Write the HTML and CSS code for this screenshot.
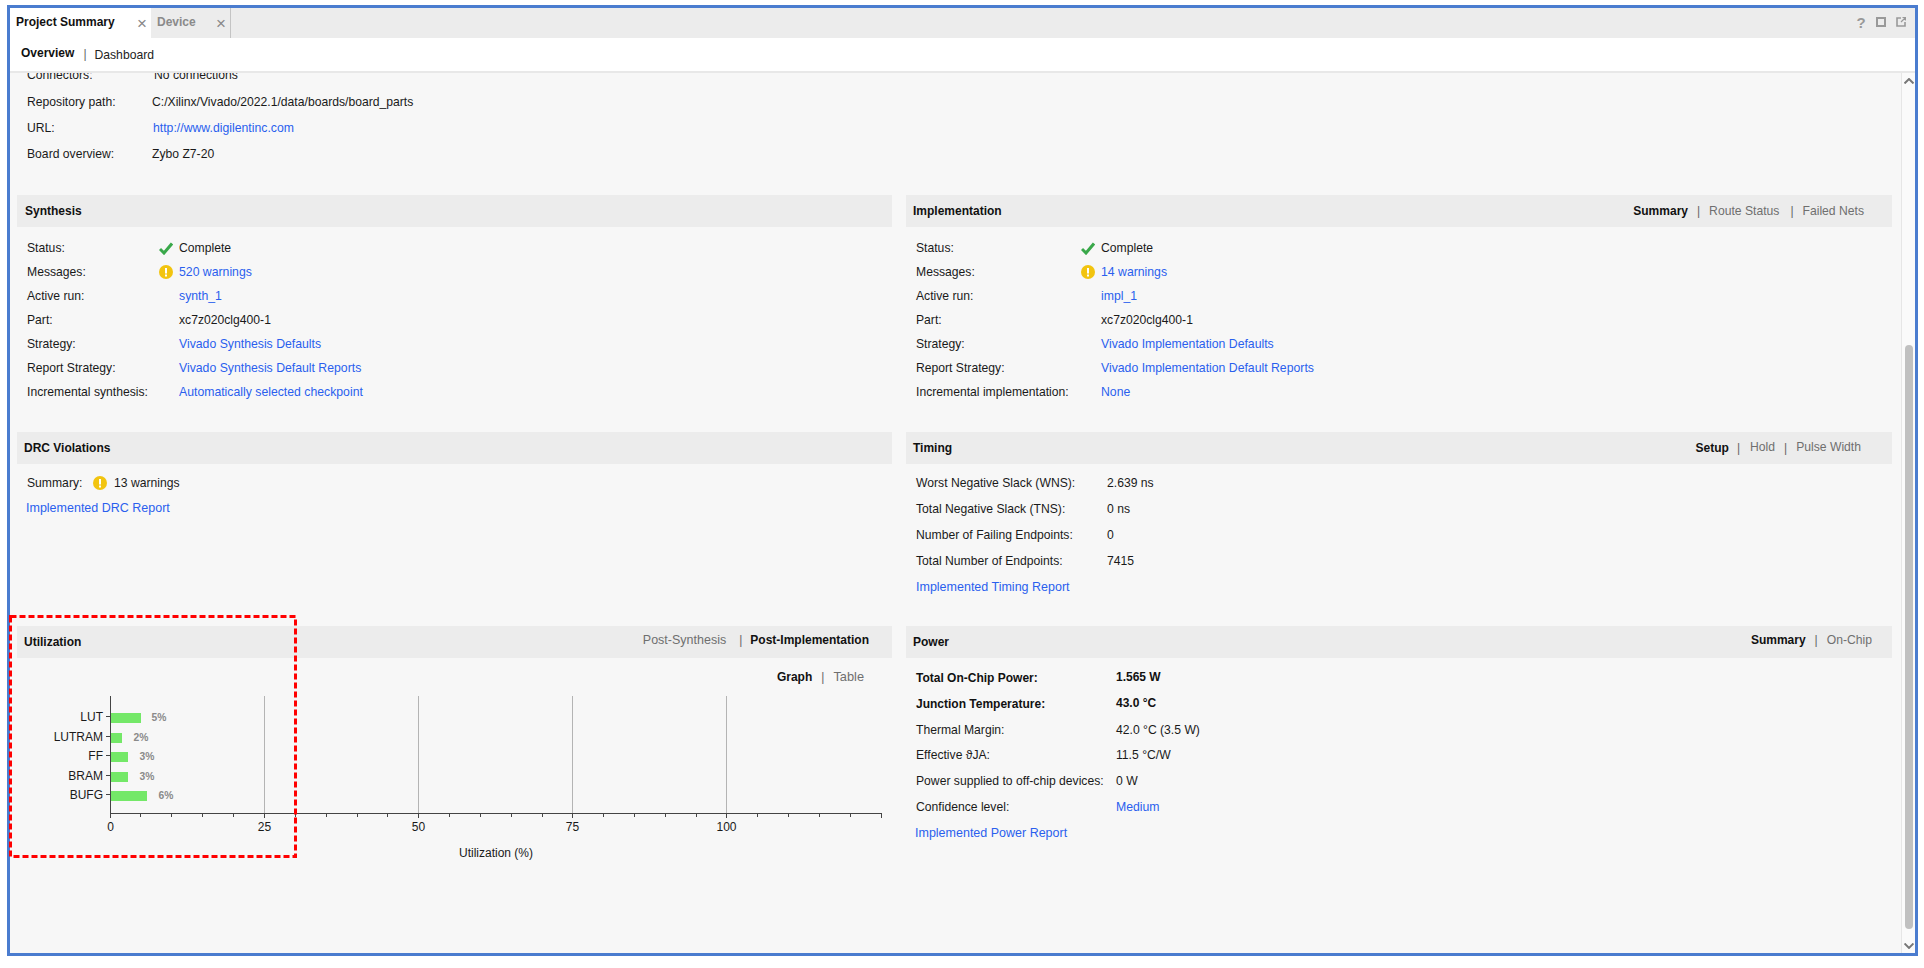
FILE: index.html
```html
<!DOCTYPE html>
<html lang="en">
<head>
<meta charset="utf-8">
<title>Project Summary</title>
<link rel="stylesheet" href="styles.css">
</head>
<body>
<div class="frame">
  <header class="tabbar">
    <div class="tab tab-active"><span class="tab-name">Project Summary</span><span class="tab-close">×</span></div>
    <div class="tab tab-idle"><span class="tab-name">Device</span><span class="tab-close">×</span></div>
    <div class="win-icons">
      <span class="help">?</span>
      <svg class="win-icon" width="10" height="10" viewBox="0 0 10 10"><rect x="1" y="1" width="8" height="8" fill="none" stroke="#999" stroke-width="2"/></svg>
      <svg class="win-icon" width="10" height="10" viewBox="0 0 10 10"><path d="M5 1H1V9H9V5" fill="none" stroke="#999" stroke-width="1.6"/><path d="M5 5L9.5 .5M6.5 .5H9.5V3.5" fill="none" stroke="#999" stroke-width="1.2"/></svg>
    </div>
  </header>
  <nav class="subnav">
    <span class="sub-strong">Overview</span><span class="sub-sep">|</span><span class="sub-item">Dashboard</span>
  </nav>
  <div class="body">
    <main class="content">
      <section class="board">
        <div class="board-row board-clipped"><span class="board-label">Connectors:</span><span class="board-val">No connections</span></div>
        <div class="board-row"><span class="board-label">Repository path:</span><span>C:/Xilinx/Vivado/2022.1/data/boards/board_parts</span></div>
        <div class="board-row"><span class="board-label">URL:</span><a class="link board-link">http://www.digilentinc.com</a></div>
        <div class="board-row"><span class="board-label">Board overview:</span><span>Zybo Z7-20</span></div>
      </section>
      <div class="panels">
        <section class="panel">
          <div class="panel-head"><h2 class="panel-title title-synth">Synthesis</h2></div>
          <div class="run run-synth">
            <div class="run-row"><span class="run-label">Status:</span><span class="run-icon"><svg width="14" height="13" viewBox="0 0 14 13"><path d="M1 7L5 11L13 1.500" fill="none" stroke="#39a84a" stroke-width="3"/></svg></span><span>Complete</span></div>
            <div class="run-row"><span class="run-label">Messages:</span><span class="run-icon"><svg width="14" height="14" viewBox="0 0 14 14"><circle cx="7" cy="7" r="7" fill="#f2c40f"/><rect x="6" y="3" width="2" height="5.5" fill="#fff"/><rect x="6" y="9.5" width="2" height="2" fill="#fff"/></svg></span><a class="link">520 warnings</a></div>
            <div class="run-row"><span class="run-label">Active run:</span><span class="run-icon"></span><a class="link">synth_1</a></div>
            <div class="run-row"><span class="run-label">Part:</span><span class="run-icon"></span><span>xc7z020clg400-1</span></div>
            <div class="run-row"><span class="run-label">Strategy:</span><span class="run-icon"></span><a class="link">Vivado Synthesis Defaults</a></div>
            <div class="run-row"><span class="run-label">Report Strategy:</span><span class="run-icon"></span><a class="link">Vivado Synthesis Default Reports</a></div>
            <div class="run-row"><span class="run-label">Incremental synthesis:</span><span class="run-icon"></span><a class="link">Automatically selected checkpoint</a></div>
          </div>
        </section>
        <section class="panel">
          <div class="panel-head"><h2 class="panel-title">Implementation</h2>
            <div class="views views-impl"><span class="view-on">Summary</span><span class="view-sep">|</span><span class="view">Route Status</span><span class="view-sep view-sep-wide">|</span><span class="view">Failed Nets</span></div></div>
          <div class="run run-impl">
            <div class="run-row"><span class="run-label">Status:</span><span class="run-icon"><svg width="14" height="13" viewBox="0 0 14 13"><path d="M1 7L5 11L13 1.500" fill="none" stroke="#39a84a" stroke-width="3"/></svg></span><span>Complete</span></div>
            <div class="run-row"><span class="run-label">Messages:</span><span class="run-icon"><svg width="14" height="14" viewBox="0 0 14 14"><circle cx="7" cy="7" r="7" fill="#f2c40f"/><rect x="6" y="3" width="2" height="5.5" fill="#fff"/><rect x="6" y="9.5" width="2" height="2" fill="#fff"/></svg></span><a class="link">14 warnings</a></div>
            <div class="run-row"><span class="run-label">Active run:</span><span class="run-icon"></span><a class="link">impl_1</a></div>
            <div class="run-row"><span class="run-label">Part:</span><span class="run-icon"></span><span>xc7z020clg400-1</span></div>
            <div class="run-row"><span class="run-label">Strategy:</span><span class="run-icon"></span><a class="link">Vivado Implementation Defaults</a></div>
            <div class="run-row"><span class="run-label">Report Strategy:</span><span class="run-icon"></span><a class="link">Vivado Implementation Default Reports</a></div>
            <div class="run-row"><span class="run-label">Incremental implementation:</span><span class="run-icon"></span><a class="link">None</a></div>
          </div>
        </section>
        <section class="panel">
          <div class="panel-head"><h2 class="panel-title">DRC Violations</h2></div>
          <div class="drc">
            <div class="drc-row"><span class="drc-label">Summary:</span><svg width="14" height="14" viewBox="0 0 14 14"><circle cx="7" cy="7" r="7" fill="#f2c40f"/><rect x="6" y="3" width="2" height="5.5" fill="#fff"/><rect x="6" y="9.5" width="2" height="2" fill="#fff"/></svg><span>13 warnings</span></div>
            <a class="link report-link drc-link">Implemented DRC Report</a>
          </div>
        </section>
        <section class="panel">
          <div class="panel-head"><h2 class="panel-title">Timing</h2>
            <div class="views views-timing"><span class="view-on">Setup</span><span class="view-sep view-sep-setup">|</span><span class="view">Hold</span><span class="view-sep">|</span><span class="view">Pulse Width</span></div></div>
          <div class="stats stats-timing">
            <div class="stat"><span class="stat-label">Worst Negative Slack (WNS):</span><span>2.639 ns</span></div>
            <div class="stat"><span class="stat-label">Total Negative Slack (TNS):</span><span>0 ns</span></div>
            <div class="stat"><span class="stat-label">Number of Failing Endpoints:</span><span>0</span></div>
            <div class="stat"><span class="stat-label">Total Number of Endpoints:</span><span>7415</span></div>
            <div class="stat"><a class="link report-link">Implemented Timing Report</a></div>
          </div>
        </section>
        <section class="panel">
          <div class="panel-head"><h2 class="panel-title">Utilization</h2>
            <div class="views views-util"><span class="view view-wide">Post-Synthesis</span><span class="view-sep view-sep-util">|</span><span class="view-on">Post-Implementation</span></div></div>
          <div class="chart-tabs"><span class="view-on">Graph</span><span class="view-sep">|</span><span class="view view-table">Table</span></div>
          <svg class="chart" width="875" height="180" viewBox="17 690 875 180">
            <g class="grid">
              <path d="M264.500 696V813M418.500 696V813M572.500 696V813M726.500 696V813"/>
            </g>
            <g class="axis">
              <path d="M110.500 696V813.500H882"/>
              <path d="M106 716.500H110M106 736.500H110M106 755.500H110M106 775.500H110M106 794.500H110"/>
              <path d="M110.500 813V818M140.500 813V817M171.500 813V817M202.500 813V817M233.500 813V817M264.500 813V818M295.500 813V817M326.500 813V817M357.500 813V817M387.500 813V817M418.500 813V818M449.500 813V817M480.500 813V817M511.500 813V817M542.500 813V817M572.500 813V818M603.500 813V817M634.500 813V817M665.500 813V817M696.500 813V817M726.500 813V818M757.500 813V817M788.500 813V817M819.500 813V817M850.500 813V817M881.500 813V818"/>
            </g>
            <g class="bars">
              <rect x="111" y="713" width="30" height="10"/>
              <rect x="111" y="733" width="11" height="10"/>
              <rect x="111" y="752" width="17" height="10"/>
              <rect x="111" y="772" width="17" height="10"/>
              <rect x="111" y="791" width="36" height="10"/>
            </g>
            <g class="cat">
              <text x="103" y="721">LUT</text>
              <text x="103" y="741">LUTRAM</text>
              <text x="103" y="760">FF</text>
              <text x="103" y="780">BRAM</text>
              <text x="103" y="799">BUFG</text>
            </g>
            <g class="pct">
              <text x="151.500" y="721">5%</text>
              <text x="133.500" y="741">2%</text>
              <text x="139.500" y="760">3%</text>
              <text x="139.500" y="780">3%</text>
              <text x="158.500" y="799">6%</text>
            </g>
            <g class="tick">
              <text x="110.500" y="831">0</text>
              <text x="264.500" y="831">25</text>
              <text x="418.500" y="831">50</text>
              <text x="572.500" y="831">75</text>
              <text x="726.500" y="831">100</text>
              <text x="496" y="857">Utilization (%)</text>
            </g>
          </svg>
        </section>
        <section class="panel">
          <div class="panel-head"><h2 class="panel-title">Power</h2>
            <div class="views views-power"><span class="view-on">Summary</span><span class="view-sep">|</span><span class="view">On-Chip</span></div></div>
          <div class="stats stats-power">
            <div class="stat stat-bold"><span class="stat-label">Total On-Chip Power:</span><span class="stat-raised">1.565 W</span></div>
            <div class="stat stat-bold"><span class="stat-label">Junction Temperature:</span><span class="stat-raised">43.0 °C</span></div>
            <div class="stat"><span class="stat-label">Thermal Margin:</span><span>42.0 °C (3.5 W)</span></div>
            <div class="stat"><span class="stat-label">Effective ϑJA:</span><span>11.5 °C/W</span></div>
            <div class="stat"><span class="stat-label">Power supplied to off-chip devices:</span><span>0 W</span></div>
            <div class="stat"><span class="stat-label">Confidence level:</span><a class="link">Medium</a></div>
            <div class="stat"><a class="link report-link stat-link">Implemented Power Report</a></div>
          </div>
        </section>
      </div>
    </main>
    <aside class="scrollbar">
      <svg width="10" height="6" viewBox="0 0 10 6"><path d="M.5 5.500L5 1L9.500 5.500" fill="none" stroke="#777" stroke-width="2"/></svg>
      <div class="thumb"></div>
      <svg width="10" height="6" viewBox="0 0 10 6"><path d="M.5 .5L5 5L9.500 .5" fill="none" stroke="#777" stroke-width="2"/></svg>
    </aside>
  </div>
</div>
<svg class="callout" width="289" height="244" viewBox="0 0 289 244"><rect x="1.500" y="1.500" width="285" height="240" fill="none" stroke="#ff0000" stroke-width="3" stroke-dasharray="6 3"/></svg>
</body>
</html>
```
FILE: styles.css
```css
* { box-sizing: border-box; }
html, body { margin: 0; padding: 0; background: #fff; }
body { width: 1924px; height: 968px; overflow: hidden; font: 12.17px/1 "Liberation Sans", Arial, sans-serif; color: #1a1a1a; }
.frame { width: 1911px; height: 951px; margin: 5px 0 0 7px; border: 3px solid #4a7ccf; display: flex; flex-direction: column; background: #f7f7f7; }

.tabbar { height: 30px; flex: none; background: #ececec; display: flex; }
.tab { height: 30px; display: flex; position: relative; font-weight: bold; font-size: 12px; line-height: 29px; }
.tab-active { width: 141px; background: #fff; padding-left: 6px; color: #111; }
.tab-idle { width: 80px; padding-left: 6px; color: #8a8a8a; border-right: 1px solid #c4c4c4; }
.tab-close { position: absolute; right: 4px; top: 2px; font-weight: normal; font-size: 17px; color: #888; line-height: 27px; }
.win-icons { margin-left: auto; display: flex; align-items: center; gap: 10px; padding: 0 9px 2px 0; }
.help { font-weight: bold; font-size: 15px; color: #999; width: 10px; text-align: center; }
.win-icon { display: block; }

.subnav { height: 35px; flex: none; background: #fff; border-bottom: 2px solid #e8e8e8; display: flex; align-items: center; padding: 0 0 1px 11px; }
.sub-strong { font-weight: bold; font-size: 12px; color: #111; position: relative; top: -1px; }
.sub-sep { color: #666; margin: 0 8px 0 9px; font-size: 12px; }
.sub-item { color: #222; position: relative; top: 1px; }

.body { flex: 1; min-height: 0; display: flex; }
.content { flex: 1; min-width: 0; overflow: hidden; padding-left: 7px; }

.board { margin-top: -11px; height: 133px; padding-left: 10px; }
.board-row { height: 26px; line-height: 26px; display: flex; }
.board-clipped { height: 27px; }
.board-label { width: 125px; flex: none; }
.board-val { padding-left: 2px; }
.board-link { padding-left: 1px; }

.link { color: #2a5fee; font-size: 12.25px; }
.report-link { font-size: 12.5px; }

.panels { display: grid; grid-template-columns: 875px 986px; column-gap: 14px; grid-template-rows: 237px 194px auto; }
.panel { min-width: 0; }
.panel-head { height: 32px; background: #ececec; display: flex; align-items: center; justify-content: space-between; }
.panel-title { margin: 0; font-size: 12px; font-weight: bold; color: #111; padding-left: 7px; }
.title-synth { padding-left: 8px; }
.views { display: flex; align-items: center; height: 100%; }
.view-on { font-weight: bold; font-size: 12px; color: #111; }
.view { color: #6f6f6f; }
.view-wide { font-size: 12.5px; }
.view-table { font-size: 12.8px; }
.view-sep { color: #666; font-size: 12px; margin: 0 9px 0 9px; }
.view-sep-wide { margin: 0 9px 0 11px; }
.view-sep-util { margin: 0 8px 0 13px; }
.view-sep-setup { margin: 0 10px 0 8px; }
.views-impl { padding-right: 28px; }
.views-timing { padding-right: 31px; padding-bottom: 1px; }
.views-util { padding-right: 23px; padding-bottom: 4px; }
.views-power { padding-right: 20px; padding-bottom: 4px; }

.run { padding: 9px 0 0 10px; }
.run-row { height: 24px; display: flex; align-items: center; }
.run-label { flex: none; }
.run-synth .run-label { width: 132px; }
.run-impl .run-label { width: 165px; }
.run-icon { flex: none; width: 20px; display: flex; align-items: center; }

.drc { padding: 7px 0 0 10px; }
.drc-row { height: 24px; display: flex; align-items: center; }
.drc-label { width: 66px; }
.drc-row svg { margin-right: 7px; }
.drc-link { display: block; margin: 7px 0 0 -1px; line-height: 12px; }

.stats { padding-left: 10px; }
.stat { height: 26px; line-height: 26px; display: flex; }
.stats-timing { padding-top: 6px; }
.stats-timing .stat-label { width: 191px; }
.stats-power { padding-top: 7px; }
.stats-power .stat { height: 25.8px; }
.stats-power .stat-label { width: 200px; flex: none; }
.stat-bold { font-weight: bold; font-size: 12px; color: #111; }
.stat-raised { position: relative; top: -1px; }
.stat-link { margin-left: -1px; }

.chart-tabs { height: 32px; display: flex; align-items: center; justify-content: flex-end; padding-right: 28px; padding-top: 6px; }
.chart-tabs .view-sep { margin: 0 9px 0 9px; }
.chart { display: block; }
.grid path { stroke: #b4b4b4; fill: none; }
.axis path { stroke: #444; fill: none; }
.bars rect { fill: #74e868; }
.cat text { font-size: 12px; text-anchor: end; fill: #1a1a1a; }
.pct text { font-size: 10.3px; font-weight: bold; fill: #8a8a8a; }
.tick text { font-size: 12px; text-anchor: middle; fill: #1a1a1a; }

.scrollbar { width: 14px; flex: none; background: #fafafa; border-left: 1px solid #e6e6e6; display: flex; flex-direction: column; align-items: center; padding: 5px 0 4px; }
.thumb { width: 8px; height: 591px; margin: 261px 0 14px; background: #c0c0c0; border-radius: 4px; }

.callout { position: absolute; left: 9px; top: 615px; display: block; }
```
